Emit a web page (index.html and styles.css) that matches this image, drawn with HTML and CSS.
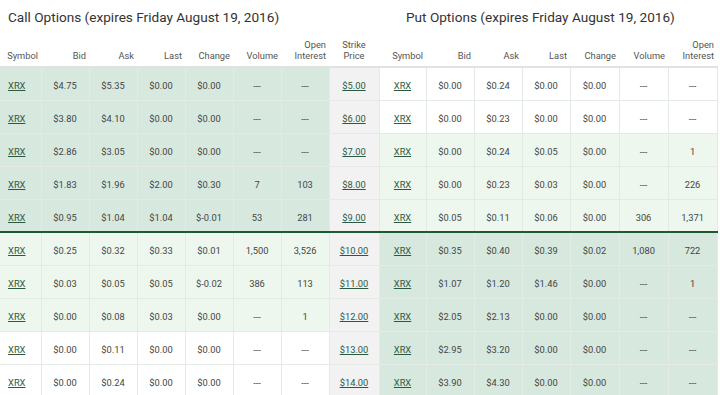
FILE: index.html
```html
<!DOCTYPE html>
<html>
<head>
<meta charset="utf-8">
<link rel="stylesheet" href="styles.css">
</head>
<body>
<div class="page">
  <div class="titles">
    <div class="title call-title">Call Options (expires Friday August 19, 2016)</div>
    <div class="title put-title">Put Options (expires Friday August 19, 2016)</div>
  </div>
  <table class="chain">
    <colgroup>
      <col class="c48"><col class="c48"><col class="c48"><col class="c48"><col class="c48"><col class="c48"><col class="c48">
      <col class="c-strike">
      <col class="c47"><col class="c48"><col class="c48"><col class="c48"><col class="c49"><col class="c49"><col class="c49">
    </colgroup>
    <thead>
      <tr>
        <th>Symbol</th><th>Bid</th><th>Ask</th><th>Last</th><th>Change</th><th>Volume</th><th>Open<br>Interest</th>
        <th class="strike-h">Strike<br>Price</th>
        <th>Symbol</th><th>Bid</th><th>Ask</th><th>Last</th><th>Change</th><th>Volume</th><th>Open<br>Interest</th>
      </tr>
    </thead>
    <tbody>
      <tr>
        <td class="itm"><a href="#">XRX</a></td><td class="itm">$4.75</td><td class="itm">$5.35</td><td class="itm">$0.00</td><td class="itm">$0.00</td><td class="itm">---</td><td class="itm">---</td>
        <td class="strike"><a href="#">$5.00</a></td>
        <td class="otm"><a href="#">XRX</a></td><td class="otm">$0.00</td><td class="otm">$0.24</td><td class="otm">$0.00</td><td class="otm">$0.00</td><td class="otm">---</td><td class="otm">---</td>
      </tr>
      <tr>
        <td class="itm"><a href="#">XRX</a></td><td class="itm">$3.80</td><td class="itm">$4.10</td><td class="itm">$0.00</td><td class="itm">$0.00</td><td class="itm">---</td><td class="itm">---</td>
        <td class="strike"><a href="#">$6.00</a></td>
        <td class="otm"><a href="#">XRX</a></td><td class="otm">$0.00</td><td class="otm">$0.23</td><td class="otm">$0.00</td><td class="otm">$0.00</td><td class="otm">---</td><td class="otm">---</td>
      </tr>
      <tr>
        <td class="itm"><a href="#">XRX</a></td><td class="itm">$2.86</td><td class="itm">$3.05</td><td class="itm">$0.00</td><td class="itm">$0.00</td><td class="itm">---</td><td class="itm">---</td>
        <td class="strike"><a href="#">$7.00</a></td>
        <td class="near"><a href="#">XRX</a></td><td class="near">$0.00</td><td class="near">$0.24</td><td class="near">$0.05</td><td class="near">$0.00</td><td class="near">---</td><td class="near">1</td>
      </tr>
      <tr>
        <td class="itm"><a href="#">XRX</a></td><td class="itm">$1.83</td><td class="itm">$1.96</td><td class="itm">$2.00</td><td class="itm">$0.30</td><td class="itm">7</td><td class="itm">103</td>
        <td class="strike"><a href="#">$8.00</a></td>
        <td class="near"><a href="#">XRX</a></td><td class="near">$0.00</td><td class="near">$0.23</td><td class="near">$0.03</td><td class="near">$0.00</td><td class="near">---</td><td class="near">226</td>
      </tr>
      <tr>
        <td class="itm"><a href="#">XRX</a></td><td class="itm">$0.95</td><td class="itm">$1.04</td><td class="itm">$1.04</td><td class="itm">$-0.01</td><td class="itm">53</td><td class="itm">281</td>
        <td class="strike"><a href="#">$9.00</a></td>
        <td class="near"><a href="#">XRX</a></td><td class="near">$0.05</td><td class="near">$0.11</td><td class="near">$0.06</td><td class="near">$0.00</td><td class="near">306</td><td class="near">1,371</td>
      </tr>
      <tr class="money-line">
        <td class="near"><a href="#">XRX</a></td><td class="near">$0.25</td><td class="near">$0.32</td><td class="near">$0.33</td><td class="near">$0.01</td><td class="near">1,500</td><td class="near">3,526</td>
        <td class="strike"><a href="#">$10.00</a></td>
        <td class="itm"><a href="#">XRX</a></td><td class="itm">$0.35</td><td class="itm">$0.40</td><td class="itm">$0.39</td><td class="itm">$0.02</td><td class="itm">1,080</td><td class="itm">722</td>
      </tr>
      <tr>
        <td class="near"><a href="#">XRX</a></td><td class="near">$0.03</td><td class="near">$0.05</td><td class="near">$0.05</td><td class="near">$-0.02</td><td class="near">386</td><td class="near">113</td>
        <td class="strike"><a href="#">$11.00</a></td>
        <td class="itm"><a href="#">XRX</a></td><td class="itm">$1.07</td><td class="itm">$1.20</td><td class="itm">$1.46</td><td class="itm">$0.00</td><td class="itm">---</td><td class="itm">1</td>
      </tr>
      <tr>
        <td class="near"><a href="#">XRX</a></td><td class="near">$0.00</td><td class="near">$0.08</td><td class="near">$0.03</td><td class="near">$0.00</td><td class="near">---</td><td class="near">1</td>
        <td class="strike"><a href="#">$12.00</a></td>
        <td class="itm"><a href="#">XRX</a></td><td class="itm">$2.05</td><td class="itm">$2.13</td><td class="itm">$0.00</td><td class="itm">$0.00</td><td class="itm">---</td><td class="itm">---</td>
      </tr>
      <tr>
        <td class="otm"><a href="#">XRX</a></td><td class="otm">$0.00</td><td class="otm">$0.11</td><td class="otm">$0.00</td><td class="otm">$0.00</td><td class="otm">---</td><td class="otm">---</td>
        <td class="strike"><a href="#">$13.00</a></td>
        <td class="itm"><a href="#">XRX</a></td><td class="itm">$2.95</td><td class="itm">$3.20</td><td class="itm">$0.00</td><td class="itm">$0.00</td><td class="itm">---</td><td class="itm">---</td>
      </tr>
      <tr>
        <td class="otm"><a href="#">XRX</a></td><td class="otm">$0.00</td><td class="otm">$0.24</td><td class="otm">$0.00</td><td class="otm">$0.00</td><td class="otm">---</td><td class="otm">---</td>
        <td class="strike"><a href="#">$14.00</a></td>
        <td class="itm"><a href="#">XRX</a></td><td class="itm">$3.90</td><td class="itm">$4.30</td><td class="itm">$0.00</td><td class="itm">$0.00</td><td class="itm">---</td><td class="itm">---</td>
      </tr>
    </tbody>
  </table>
</div>
</body>
</html>
```
FILE: styles.css
```css
html, body {
  margin: 0;
  padding: 0;
  background: #ffffff;
  overflow: hidden;
}

.page {
  width: 720px;
  font-family: Roboto, "Liberation Sans", sans-serif;
  color: #454545;
}

.titles {
  display: flex;
  height: 36px;
  align-items: flex-start;
}

.title {
  font-size: 13.6px;
  color: #333333;
  padding-top: 7px;
  line-height: 20px;
  white-space: nowrap;
}

.call-title {
  width: 379px;
  padding-left: 8px;
  box-sizing: border-box;
}

.put-title {
  padding-left: 27px;
}

.chain {
  border-collapse: collapse;
  table-layout: fixed;
  width: 724px;
  margin-left: -7px;
  font-size: 9.3px;
}

.c48 { width: 48px; }
.c47 { width: 47px; }
.c49 { width: 49px; }
.c-strike { width: 50px; }

.chain th {
  height: 25px;
  font-weight: 400;
  color: #555;
  text-align: right;
  vertical-align: bottom;
  padding: 0 3px 5px 0;
  line-height: 10.5px;
  border-bottom: 2px solid #e2e2e2;
}

.chain th.strike-h {
  text-align: center;
  padding-right: 0;
}

.chain td {
  height: 33px;
  padding: 4px 0 0;
  text-align: center;
  border: 1px solid #e4ebe7;
  border-top: none;
  border-left-color: #e6ece8;
  box-sizing: border-box;
}

.chain td:first-child {
  border-left: none;
}

.chain td.itm { background: #d7e8df; }
.chain td.near { background: #eef7ee; }
.chain td.otm { background: #ffffff; }
.chain td.strike { background: #f2f2f2; }

.chain a {
  color: #2b5a42;
  text-decoration: underline;
}

.chain tr.money-line td {
  border-top: 2px solid #1d5a33;
}
```
